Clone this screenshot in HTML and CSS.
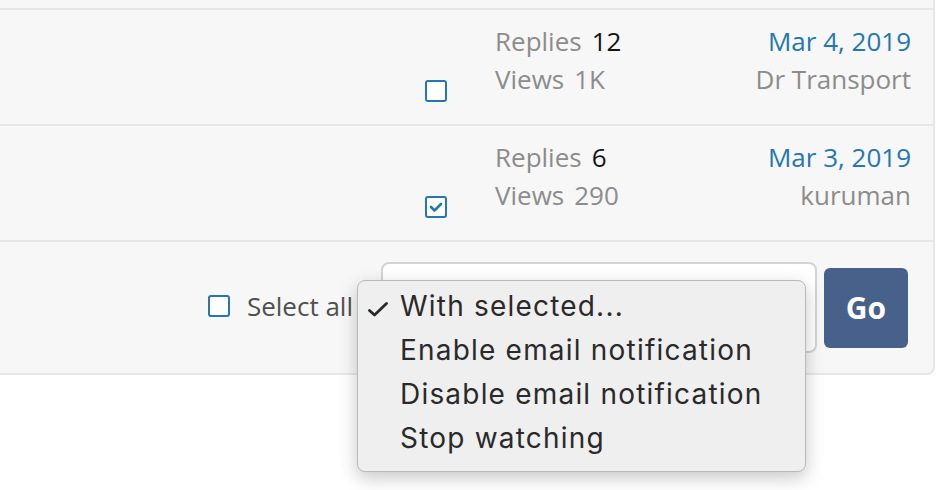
FILE: index.html
```html
<!DOCTYPE html>
<html lang="en">
<head>
    <meta charset="UTF-8">
    <meta name="viewport" content="width=device-width, initial-scale=1.0">
    <title>Watched threads</title>
    <link rel="stylesheet" href="styles.css">
</head>
<body>
    <div class="block">
        <div class="block-body">
            <div class="struct-item">
                <div class="cell-main"></div>
                <div class="cell-select"><span class="checkbox"></span></div>
                <div class="cell-meta">
                    <dl class="pair"><dt>Replies</dt><dd>12</dd></dl>
                    <dl class="pair pair--minor"><dt>Views</dt><dd>1K</dd></dl>
                </div>
                <div class="cell-latest">
                    <a href="#" class="latest-date">Mar 4, 2019</a>
                    <div class="latest-user">Dr Transport</div>
                </div>
            </div>
            <div class="struct-item">
                <div class="cell-main"></div>
                <div class="cell-select">
                    <span class="checkbox is-checked">
                        <svg width="18" height="18" viewBox="0 0 18 18"><polyline points="4,9 7.5,12.5 14,6" fill="none" stroke="#2577b1" stroke-width="2.6" stroke-linecap="round" stroke-linejoin="round"/></svg>
                    </span>
                </div>
                <div class="cell-meta">
                    <dl class="pair"><dt>Replies</dt><dd>6</dd></dl>
                    <dl class="pair pair--minor"><dt>Views</dt><dd>290</dd></dl>
                </div>
                <div class="cell-latest">
                    <a href="#" class="latest-date">Mar 3, 2019</a>
                    <div class="latest-user">kuruman</div>
                </div>
            </div>
        </div>
        <div class="block-footer">
            <label class="select-all"><span class="checkbox"></span>Select all</label>
            <div class="action-select">
                <select class="input">
                    <option>With selected...</option>
                </select>
                <ul class="select-menu">
                    <li class="is-selected">
                        <span class="mark"><svg width="20" height="15" viewBox="0 0 20 15"><path d="M1.5 8.5 L6.5 13 L18.5 1.5" fill="none" stroke="#2a2a2a" stroke-width="2.8" stroke-linecap="round" stroke-linejoin="round"/></svg></span>With selected...
                    </li>
                    <li><span class="mark"></span>Enable email notification</li>
                    <li><span class="mark"></span>Disable email notification</li>
                    <li><span class="mark"></span>Stop watching</li>
                </ul>
            </div>
            <button class="button">Go</button>
        </div>
    </div>
</body>
</html>
```

FILE: styles.css
```css
html, body {
    height: 100%;
}
body {
    margin: 0;
    min-height: 490px;
    background: #fff;
    font-family: 'Open Sans', sans-serif;
}
.block {
    margin: 0 5px 0 -10px;
    padding-top: 8px;
    background: #f7f7f7;
    border: 2px solid #e7e7e7;
    border-top: none;
    border-radius: 0 0 8px 8px;
}
.struct-item {
    display: flex;
    height: 114px;
    border-top: 2px solid #e7e7e7;
}
.cell-main {
    flex: 1;
}
.cell-select {
    display: flex;
    align-self: flex-end;
    margin-bottom: 22px;
}
.checkbox {
    display: inline-flex;
    align-items: center;
    justify-content: center;
    width: 22px;
    height: 22px;
    box-sizing: border-box;
    border: 2px solid #2577b1;
    border-radius: 3px;
    background: #fff;
}
.cell-meta {
    width: 220px;
    margin-left: 48px;
    padding-top: 12px;
}
.pair {
    display: flex;
    margin: 0;
    font-size: 26px;
    line-height: 38px;
}
.pair dt {
    color: #8c8c8c;
}
.pair dd {
    margin: 0 0 0 10px;
    color: #141414;
}
.pair--minor dd {
    color: #8c8c8c;
}
.cell-latest {
    width: 196px;
    padding: 12px 22px 0 0;
    text-align: right;
    font-size: 26px;
    line-height: 38px;
}
.latest-date {
    color: #2577b1;
    text-decoration: none;
}
.latest-user {
    color: #8c8c8c;
}
.block-footer {
    display: flex;
    align-items: center;
    justify-content: flex-end;
    height: 131px;
    padding-right: 25px;
    border-top: 2px solid #e7e7e7;
}
.select-all {
    display: flex;
    align-items: center;
    margin-right: 28px;
    margin-top: -3px;
    font-size: 26px;
    color: #505050;
}
.select-all .checkbox {
    margin-right: 17px;
}
.action-select {
    position: relative;
    margin-right: 7px;
}
.input {
    display: block;
    width: 436px;
    height: 91px;
    padding: 0 20px;
    border: 2px solid #d3d3d3;
    border-radius: 8px;
    background: #fff;
    appearance: none;
    font-family: Inter, sans-serif;
    font-size: 28px;
    color: #2a2a2a;
}
.select-menu {
    position: absolute;
    left: -24px;
    top: 18px;
    width: 447px;
    margin: 0;
    padding: 3px 0 11px;
    list-style: none;
    background: #efefef;
    border: 1px solid #b9b9b9;
    border-radius: 8px;
    box-shadow: 0 6px 18px rgba(0, 0, 0, 0.22);
    font-family: Inter, sans-serif;
    font-size: 28px;
    letter-spacing: 1.2px;
    line-height: 44px;
    color: #2a2a2a;
}
.select-menu li {
    display: flex;
    align-items: center;
    padding-left: 10px;
}
.select-menu .mark {
    display: flex;
    width: 32px;
    padding-top: 6px;
}
.button {
    width: 84px;
    height: 80px;
    border: none;
    border-radius: 6px;
    background: #47618a;
    color: #fff;
    font-family: 'Open Sans', sans-serif;
    font-size: 30px;
    font-weight: bold;
    cursor: pointer;
}
```
